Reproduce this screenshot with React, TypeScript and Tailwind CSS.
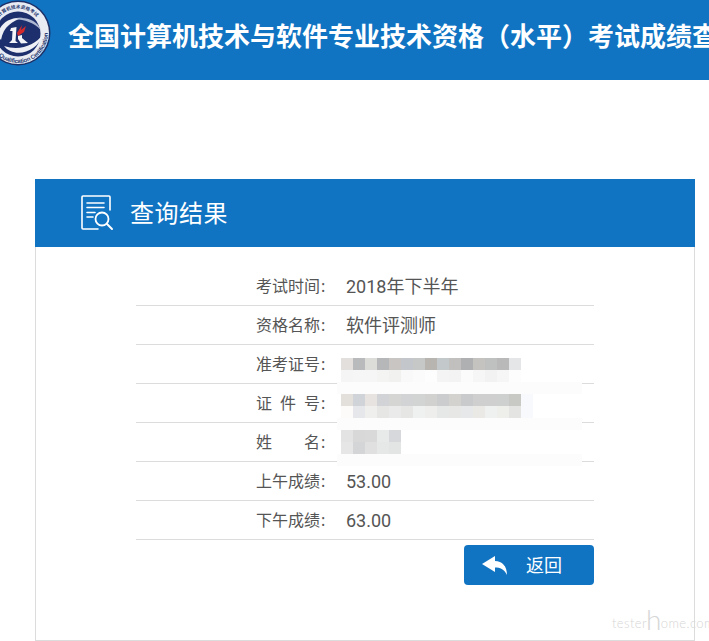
const BLUE = 'bg-[#1074c3]';

const rowOne = ['#e2dfdc', '#b8babc', '#dcdcd9', '#b5b7b9', '#c9c5c2', '#c3c6cb', '#c6c8c8', '#b8b4b0', '#c3c8ca', '#c1c0bf', '#afb0b1', '#c4c3c0', '#bfc0c0', '#b9b9b9', '#e4e6e8'];
const rowOneB = ['#f5f5f5', '#f6f6f6', '#f6f6f6', '#f4f5f3', '#f1f1f0', '#f9f9f9', '#fbfbfb', '#fdfdfd', '#f4f4f4', '#f3f3f3', '#fafbfa', '#f6f6f6', '#f2f2f2', '#f6f6f6', '#fdfdfd'];
const rowTwo = ['#e3e0dc', '#d0d4d9', '#e6e3e0', '#d1d3d6', '#d5d5d4', '#d1d3d4', '#d2d3d3', '#d1d1d0', '#cbcccd', '#d3d2cf', '#c9cacc', '#cfcfd0', '#cfcfcf', '#cecfcf', '#c8c8c5', '#f8f9fc'];
const rowTwoB = ['#fcfbfa', '#e5e7ea', '#efefed', '#e6e6e4', '#eaeaea', '#e6e6e5', '#eff1f0', '#eeeeec', '#e6e7e7', '#e7e7e5', '#e7e8ea', '#ebe9e6', '#eff1f1', '#eeeeeb', '#e4e4e3', '#f8f9fc'];
const rowThree = ['#e3e3e4', '#d8d8d9', '#d9d9da', '#e8e9e9', '#d7d8db'];
const rowThreeB = ['#e6e6e6', '#d3d5d6', '#e1e0e1', '#e6e8e8', '#e3e4e4'];

const Mosaic = ({ top, bottom }: { top: string[]; bottom: string[] }) => (
  <div className="relative self-start">
    <div className="flex">
      {top.map((c, i) => (
        <div key={i} className="w-[12px] h-[12px]" style={{ background: c }} />
      ))}
    </div>
    <div className="flex">
      {bottom.map((c, i) => (
        <div key={i} className="w-[12px] h-[12px]" style={{ background: c }} />
      ))}
    </div>
    <div className="absolute left-[-4px] top-[24px] w-[245px] h-[12px] bg-[#fcfcfc]" />
  </div>
);

const Row = ({ label, children }: { label: string; children: React.ReactNode }) => (
  <div className="flex h-[39px] items-center border-b border-[#dcdcdc] pl-[120px]">
    <div className="w-[64px] text-[16px] text-[#555] [text-align-last:justify]">{label}</div>
    <div className="w-[26px] text-[16px] text-[#555] pl-[1px]">:</div>
    {children}
  </div>
);

const Value = ({ children }: { children: React.ReactNode }) => (
  <div className="text-[18px] text-[#555] font-['Roboto','Noto_Sans_CJK_SC',sans-serif]">{children}</div>
);

const Logo = () => (
  <svg viewBox="0 0 66 66" className="w-[66px] h-[66px] ml-[-15px] shrink-0">
    <circle cx="33" cy="33" r="32.5" fill="#1d3067" />
    <circle cx="33" cy="33" r="31" fill="#e9ebf3" />
    <circle cx="33" cy="34" r="22.5" fill="#1d2f6c" />
    <defs>
      <path id="logo-bottom" d="M 13.7 56 A 30 30 0 0 0 62.9 30.4" />
      <path id="logo-top" d="M 10 24.6 A 24.5 24.5 0 0 1 51.8 17.3" />
    </defs>
    <text fontSize="6" fill="#26386f" fontFamily="Liberation Sans, sans-serif" fontWeight="700">
      <textPath href="#logo-bottom" textLength="68">Qualification Certification</textPath>
    </text>
    <text fontSize="4.6" fill="#26386f" fontFamily="Noto Sans CJK SC, sans-serif" fontWeight="700">
      <textPath href="#logo-top">全国计算机技术资格考试</textPath>
    </text>
    {/* swooshes */}
    <path d="M19 46 C 28 58 52 54 58 34 C 50 46 34 51 19 46 Z" fill="#eef0f6" />
    <path d="M13 36 C 13 24 26 16 38 18 C 28 20 18 27 16 40 Z" fill="#eef0f6" />
    <path d="M30 19 C 40 16 52 20 56 30 C 48 22 40 20 30 19 Z" fill="#aeb8d2" />
    {/* the mark */}
    <path d="M26 28 L31.5 27 L30.5 41 L33 43 L24 43 L27 40 L27.5 31 L25 31 Z" fill="#f4f5f8" />
    <path d="M32 33 L37 25 L36 30 L41 26 L39 32 L33 36 Z" fill="#d42a2e" />
    <path d="M33 36 L37 35 L37 38 L43 43 L36 43.5 L33 39 Z" fill="#f4f5f8" />
  </svg>
);

const ReportIcon = () => (
  <svg viewBox="0 0 34 36" className="w-[34px] h-[36px] ml-[46px] shrink-0" fill="none" stroke="#fff" strokeWidth="1.6" strokeLinecap="round" strokeLinejoin="round">
    <path d="M29 15 V2 Q29 1 28 1 H2 Q1 1 1 2 V33 Q1 34 2 34 H17" />
    <path d="M6 8 H23 M6 12.5 H23 M6 17.5 H14 M6 22 H12" strokeWidth="1.6" />
    <circle cx="21" cy="24" r="6.5" strokeWidth="1.8" />
    <path d="M26 29 L31 34" strokeWidth="2" />
  </svg>
);

const ReplyIcon = () => (
  <svg viewBox="0 0 25 20" className="w-[25px] h-[20px] shrink-0" fill="#fff">
    <path d="M0 9 L13 1 V6 C20 6 25 11 25 20 C22 14 18 12.5 13 12.5 V17 Z" />
  </svg>
);

export default function App() {
  return (
    <div className="relative w-[709px] h-[641px] overflow-hidden bg-white font-['Noto_Sans','Noto_Sans_CJK_SC',sans-serif]">
      <div className={`${BLUE} h-[80px] flex items-start overflow-hidden`}>
        <Logo />
        <div className="ml-[17px] mt-[19px] text-[26px] leading-[34px] font-bold text-white whitespace-nowrap">
          全国计算机技术与软件专业技术资格（水平）考试成绩查询
        </div>
      </div>

      <div className="mt-[99px] mx-[35px] w-[660px] h-[462px] flex flex-col">
        <div className={`${BLUE} h-[68px] flex items-center shrink-0`}>
          <ReportIcon />
          <div className="ml-[15px] text-[24px] tracking-[0.5px] text-white">查询结果</div>
        </div>

        <div className="flex-1 border-x border-b border-[#dcdcdc] pt-[20px] pl-[100px] pr-[100px]">
          <Row label="考试时间">
            <Value>2018年下半年</Value>
          </Row>
          <Row label="资格名称">
            <Value>软件评测师</Value>
          </Row>
          <Row label="准考证号">
            <div className="self-start pt-[13px] -ml-[5px]">
              <Mosaic top={rowOne} bottom={rowOneB} />
            </div>
          </Row>
          <Row label="证件号">
            <div className="self-start pt-[10px] -ml-[5px]">
              <Mosaic top={rowTwo} bottom={rowTwoB} />
            </div>
          </Row>
          <Row label="姓名">
            <div className="self-start pt-[7px] -ml-[5px]">
              <Mosaic top={rowThree} bottom={rowThreeB} />
            </div>
          </Row>
          <Row label="上午成绩">
            <Value>53.00</Value>
          </Row>
          <Row label="下午成绩">
            <Value>63.00</Value>
          </Row>
          <div className="flex justify-end mt-[5px]">
            <button className={`${BLUE} w-[130px] h-[40px] rounded-[4px] flex items-center pl-[18px] text-white text-[18px]`}>
              <ReplyIcon />
              <span className="ml-[19px]">返回</span>
            </button>
          </div>
        </div>
      </div>

      <div className="absolute left-[612px] top-[600px] h-[32px] flex items-end font-['Lato',sans-serif] font-light text-[13px] leading-[18px] tracking-[0.4px] text-[#d6d6d6] whitespace-nowrap">
        tester<span className="text-[28px] leading-[25px] font-light -mx-[1px]">h</span>ome.com
      </div>
    </div>
  );
}
